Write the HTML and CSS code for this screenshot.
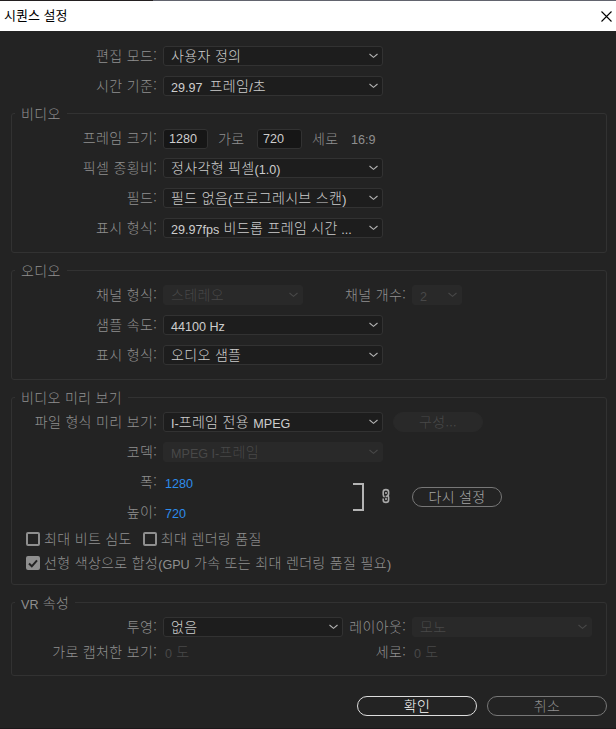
FILE: index.html
```html
<!DOCTYPE html>
<html lang="ko">
<head>
    <meta charset="UTF-8">
    <meta name="viewport" content="width=device-width, initial-scale=1.0">
    <title>시퀀스 설정</title>
    <link rel="stylesheet" href="styles.css">
</head>
<body>
    <svg class="defs">
        <symbol id="arrow" viewBox="0 0 9 6"><path d="M0.5 1 L4.5 4.3 L8.5 1" fill="none" stroke="currentColor" stroke-width="1.1"/></symbol>
    </svg>
    <div class="title-bar">
        <span>시퀀스 설정</span>
        <svg class="close" width="11" height="11"><path d="M0.5 0.5 L10.5 10.5 M10.5 0.5 L0.5 10.5" stroke="#000" stroke-width="1.1"/></svg>
    </div>
    <div class="dialog">
        <div class="rows top">
            <div class="row">
                <label>편집 모드:</label>
                <div class="select"><span>사용자 정의</span><svg><use href="#arrow"/></svg></div>
            </div>
            <div class="row">
                <label>시간 기준:</label>
                <div class="select"><span><i class="en">29.97 &nbsp;</i>프레임<i class="en">/</i>초</span><svg><use href="#arrow"/></svg></div>
            </div>
        </div>

        <fieldset class="video">
            <legend>비디오</legend>
            <div class="rows">
                <div class="row">
                    <label>프레임 크기:</label>
                    <div class="frame-size">
                        <div class="input en">1280</div>
                        <span class="unit">가로</span>
                        <div class="input en">720</div>
                        <span class="unit">세로</span>
                        <span class="ratio en">16:9</span>
                    </div>
                </div>
                <div class="row">
                    <label>픽셀 종횡비:</label>
                    <div class="select"><span>정사각형 픽셀<i class="en">(1.0)</i></span><svg><use href="#arrow"/></svg></div>
                </div>
                <div class="row">
                    <label>필드:</label>
                    <div class="select"><span>필드 없음<i class="en">(</i>프로그레시브 스캔<i class="en">)</i></span><svg><use href="#arrow"/></svg></div>
                </div>
                <div class="row">
                    <label>표시 형식:</label>
                    <div class="select"><span><i class="en">29.97fps</i> 비드롭 프레임 시간<i class="en"> ...</i></span><svg><use href="#arrow"/></svg></div>
                </div>
            </div>
        </fieldset>

        <fieldset class="audio">
            <legend>오디오</legend>
            <div class="rows">
                <div class="row">
                    <label>채널 형식:</label>
                    <div class="pair">
                        <div class="select channel disabled"><span>스테레오</span><svg><use href="#arrow"/></svg></div>
                        <label>채널 개수:</label>
                    </div>
                    <div class="select count disabled"><span class="en low">2</span><svg><use href="#arrow"/></svg></div>
                </div>
                <div class="row">
                    <label>샘플 속도:</label>
                    <div class="select"><span class="en low">44100 Hz</span><svg><use href="#arrow"/></svg></div>
                </div>
                <div class="row">
                    <label>표시 형식:</label>
                    <div class="select"><span>오디오 샘플</span><svg><use href="#arrow"/></svg></div>
                </div>
            </div>
        </fieldset>

        <fieldset class="preview">
            <legend>비디오 미리 보기</legend>
            <div class="rows">
                <div class="row">
                    <label>파일 형식 미리 보기:</label>
                    <div class="select"><span><i class="en">I-</i>프레임 전용 <i class="en">MPEG</i></span><svg><use href="#arrow"/></svg></div>
                    <button class="btn config" disabled>구성...</button>
                </div>
                <div class="row">
                    <label>코덱:</label>
                    <div class="select disabled"><span><i class="en">MPEG I-</i>프레임</span><svg><use href="#arrow"/></svg></div>
                </div>
                <div class="size">
                    <div class="rows size-rows">
                        <div class="row">
                            <label>폭:</label>
                            <span class="value en">1280</span>
                        </div>
                        <div class="row">
                            <label>높이:</label>
                            <span class="value en">720</span>
                        </div>
                    </div>
                    <div class="bracket"></div>
                    <svg class="link" width="8" height="16" viewBox="0 0 8 16" fill="none" stroke="#a8a8a8" stroke-width="1.6">
                        <path d="M2.6 9 C1.4 8.4 1.2 7.6 1.2 6.6 V4 C1.2 0.8 6.6 0.8 6.6 4 V6 C6.6 7.4 5.4 8.4 3.6 8.6"/>
                        <path d="M5.4 7 C6.6 7.6 6.6 8.6 6.6 9.4 V12 C6.6 15.2 1.2 15.2 1.2 12 V10.4"/>
                        <path d="M4 4 V6 M4 10 V12"/>
                    </svg>
                    <button class="btn reset">다시 설정</button>
                </div>
                <div class="checks">
                    <div class="check"><span class="box"></span><span>최대 비트 심도</span></div>
                    <div class="check"><span class="box"></span><span>최대 렌더링 품질</span></div>
                </div>
                <div class="checks">
                    <div class="check">
                        <span class="box on"><svg width="10" height="9" viewBox="0 0 10 9"><path d="M1 4.5 L3.8 7.3 L9 1.3" fill="none" stroke="#232323" stroke-width="2"/></svg></span>
                        <span>선형 색상으로 합성<i class="en">(GPU</i> 가속 또는 최대 렌더링 품질 필요<i class="en">)</i></span>
                    </div>
                </div>
            </div>
        </fieldset>

        <fieldset class="vr">
            <legend><i class="en">VR</i> 속성</legend>
            <div class="rows">
                <div class="row">
                    <label>투영:</label>
                    <div class="pair">
                        <div class="select projection"><span>없음</span><svg><use href="#arrow"/></svg></div>
                        <label>레이아웃:</label>
                    </div>
                    <div class="select layout disabled"><span>모노</span><svg><use href="#arrow"/></svg></div>
                </div>
                <div class="row">
                    <label>가로 캡처한 보기:</label>
                    <div class="pair">
                        <span class="degree"><i class="en">0</i> 도</span>
                        <label>세로:</label>
                    </div>
                    <span class="degree"><i class="en">0</i> 도</span>
                </div>
            </div>
        </fieldset>

        <div class="footer">
            <button class="btn ok">확인</button>
            <button class="btn cancel">취소</button>
        </div>
    </div>
</body>
</html>
```
FILE: styles.css
```css
*{
    box-sizing: border-box;
}
body{
    margin: 0;
    height: 729px;
    overflow: hidden;
    background-color: #232323;
    color: #8f8f8f;
    font-family: "Noto Sans CJK KR", sans-serif;
    font-size: 14px;
    font-weight: 300;
    line-height: 20px;
    letter-spacing: 0.33px;
    white-space: nowrap;
    border-bottom: 1px solid #1c181a;
}
.defs{
    display: none;
}
.en{
    font-family: "Liberation Sans", Arial, sans-serif;
    font-size: 12.6px;
    font-style: normal;
    font-weight: 400;
    letter-spacing: 0;
}
i.en{
    line-height: 1;
    vertical-align: -0.5px;
}
.title-bar{
    display: flex;
    justify-content: space-between;
    align-items: center;
    height: 31px;
    padding: 1px 4px 0;
    background: linear-gradient(to right, #231f20 153px, #62646e 153px) top / 100% 1px no-repeat #fff;
    color: #000;
    font-size: 13px;
    font-weight: 400;
    letter-spacing: 0;
}
.title-bar span{
    padding-bottom: 2px;
}
.dialog{
    padding: 15px 9px 0 11px;
}
.rows{
    display: flex;
    flex-direction: column;
    gap: 10px;
}
.top{
    padding-left: 1px;
}
.row{
    display: grid;
    grid-template-columns: 145px 243px auto;
    justify-content: start;
    column-gap: 6px;
    height: 20px;
}
.row label{
    line-height: 18px;
    text-align: right;
}
fieldset{
    margin: 8px 0 0;
    padding: 5px 0 0;
    border: 1px solid #323232;
    border-radius: 3px;
    min-width: 0;
}
legend{
    margin-left: 3px;
    padding: 0 6px;
    height: 19px;
    line-height: 19px;
}
.video{
    height: 149px;
}
.audio{
    height: 119px;
}
.preview{
    height: 197px;
}
.vr{
    height: 83px;
}
.vr .rows{
    gap: 5px;
}
.select{
    display: flex;
    justify-content: space-between;
    align-items: center;
    width: 220px;
    height: 20px;
    padding: 0 4px 0 7px;
    background-color: #1d1d1d;
    border: 1px solid #323232;
    border-radius: 3px;
    color: #cdcdcd;
}
.select span{
    padding-bottom: 2px;
}
.select svg{
    width: 9px;
    height: 6px;
    color: #b4b4b4;
}
.select.disabled{
    background-color: #292929;
    border-color: #292929;
    color: #484848;
}
.select.disabled svg{
    color: #484848;
}
.select .low{
    padding: 4px 0 0;
}
.channel{
    width: 140px;
}
.select.count{
    width: 50px;
}
.projection{
    width: 180px;
}
.select.layout{
    width: 180px;
}
.pair{
    display: flex;
    justify-content: space-between;
}
.frame-size{
    display: flex;
    align-items: center;
}
.input{
    width: 45px;
    height: 20px;
    padding-left: 5px;
    line-height: 19px;
    background-color: #161616;
    border: 1px solid #323232;
    border-radius: 3px;
    color: #cdcdcd;
}
.unit{
    width: 49px;
    padding: 0 0 2px 10px;
}
.ratio{
    padding-top: 2px;
}
.size{
    display: flex;
    align-items: center;
    height: 50px;
}
.size-rows{
    width: 341px;
}
.value{
    color: #2d8ceb;
    padding: 2px 0 0 2px;
}
.bracket{
    width: 11px;
    height: 28px;
    border: 2px solid #b4b4b4;
    border-left: none;
}
.link{
    margin: 0 22px 3px 18px;
}
.checks{
    display: flex;
    gap: 11px;
    height: 14px;
    padding-left: 14px;
}
.check{
    display: flex;
    align-items: center;
    gap: 4px;
}
.check span:last-child{
    line-height: 18px;
    padding-bottom: 2px;
}
.box{
    display: flex;
    justify-content: center;
    align-items: center;
    width: 14px;
    height: 14px;
    border: 2px solid #8f8f8f;
    border-radius: 2px;
}
.box.on{
    background-color: #8f8f8f;
}
.degree{
    padding-left: 2px;
    line-height: 18px;
    color: #484848;
}
.btn{
    height: 20px;
    padding: 0 0 2px;
    background-color: transparent;
    border: 1px solid #777;
    border-radius: 10px;
    color: #8f8f8f;
    font: inherit;
    letter-spacing: inherit;
    line-height: 16px;
}
.config{
    width: 90px;
    margin-left: -19px;
    background-color: #292929;
    border-color: #292929;
    color: #484848;
}
.reset{
    width: 90px;
    color: #a5a5a5;
}
.footer{
    display: flex;
    justify-content: flex-end;
    gap: 10px;
    margin-top: 20px;
}
.footer .btn{
    width: 120px;
}
.footer .ok{
    border: 1px solid #ddd;
    color: #fff;
}
```
